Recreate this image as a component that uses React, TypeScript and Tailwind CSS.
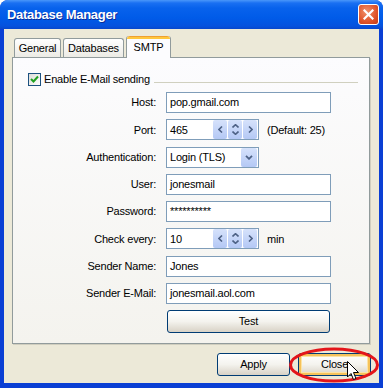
import type { ReactNode } from 'react'

const inputBox = 'h-[21px] border border-[#7F9DB9] bg-white flex items-center pl-[3px]'

function Row({ label, children }: { label: string; children: ReactNode }) {
  return (
    <div className="flex h-[21px] items-center">
      <div className="w-[144px] pr-[1px] text-right">{label}</div>
      <div className="ml-[9px] flex items-center">{children}</div>
    </div>
  )
}

function SpinButtons() {
  return (
    <div className="ml-auto mr-[1px] flex h-[19px] gap-[1px]">
      {/* left */}
      <div className="flex w-[14px] items-center justify-center rounded-[2px] bg-gradient-to-b from-[#D6E2FB] to-[#B4C8F5]">
        <svg width="5" height="7" viewBox="0 0 5 7">
          <path d="M4 0.5 L1 3.5 L4 6.5" fill="none" stroke="#4D6185" strokeWidth="1.6" />
        </svg>
      </div>
      {/* up / down */}
      <div className="flex w-[14px] flex-col items-center justify-center gap-[3px] rounded-[2px] bg-gradient-to-b from-[#D6E2FB] to-[#B4C8F5]">
        <svg width="7" height="4" viewBox="0 0 7 4">
          <path d="M0.5 3.5 L3.5 0.7 L6.5 3.5" fill="none" stroke="#4D6185" strokeWidth="1.6" />
        </svg>
        <svg width="7" height="4" viewBox="0 0 7 4">
          <path d="M0.5 0.5 L3.5 3.3 L6.5 0.5" fill="none" stroke="#4D6185" strokeWidth="1.6" />
        </svg>
      </div>
      {/* right */}
      <div className="flex w-[14px] items-center justify-center rounded-[2px] bg-gradient-to-b from-[#D6E2FB] to-[#B4C8F5]">
        <svg width="5" height="7" viewBox="0 0 5 7">
          <path d="M1 0.5 L4 3.5 L1 6.5" fill="none" stroke="#4D6185" strokeWidth="1.6" />
        </svg>
      </div>
    </div>
  )
}

function XpButton({ children, focused = false }: { children: ReactNode; focused?: boolean }) {
  return (
    <div className="h-[23px] w-[73px] rounded-[3px] border border-[#003C74] bg-gradient-to-b from-[#FFFFFF] via-[#F4F3EE] to-[#D8D2C6]">
      <div
        className={`flex h-full w-full items-center justify-center rounded-[2px] ${
          focused ? 'border-2 border-[#F5C25A] shadow-[inset_0_0_0_1px_#FCE3A5]' : ''
        }`}
      >
        {children}
      </div>
    </div>
  )
}

export default function App() {
  return (
    <div className="relative h-[388px] w-[383px] overflow-hidden bg-white font-['Liberation_Sans',Arial,sans-serif] text-[11px] tracking-[-0.2px] text-black">
      <div className="flex h-full flex-col rounded-t-[8px] bg-[#0A3FD4]">
        {/* title bar */}
        <div className="flex h-[29px] shrink-0 items-center justify-between rounded-t-[8px] bg-[linear-gradient(to_bottom,#4A97FA_0px,#1A70F2_3px,#0862EC_8px,#005BE8_18px,#0552DE_26px,#0847CC_29px)] pl-[7px] pr-[4px]">
          <span className="text-[13px] font-bold tracking-[-0.3px] text-white [text-shadow:1px_1px_0_#0B2E9A]">
            Database Manager
          </span>
          <div className="flex h-[21px] w-[21px] items-center justify-center rounded-[3px] border border-white bg-[radial-gradient(circle_at_40%_35%,#F0926C,#E0542A_60%,#C23A16)]">
            <svg width="11" height="11" viewBox="0 0 11 11">
              <path d="M1.5 1.5 L9.5 9.5 M9.5 1.5 L1.5 9.5" stroke="white" strokeWidth="2.2" strokeLinecap="square" />
            </svg>
          </div>
        </div>

        {/* body */}
        <div className="mx-[4px] mb-[5px] flex flex-1 flex-col bg-[#ECE9D8]">
          {/* tabs */}
          <div className="relative z-10 mt-[7px] flex h-[21px] items-end gap-[2px] pl-[10px]">
            <div className="flex h-[19px] w-[47px] items-center justify-center rounded-t-[3px] border border-b-0 border-[#919B9C] bg-gradient-to-b from-white to-[#ECEBE5] pt-[1px]">
              General
            </div>
            <div className="flex h-[19px] w-[61px] items-center justify-center rounded-t-[3px] border border-b-0 border-[#919B9C] bg-gradient-to-b from-white to-[#ECEBE5] pt-[1px]">
              Databases
            </div>
            <div className="-mb-px flex h-[22px] w-[45px] flex-col rounded-t-[3px] border-x border-[#919B9C] bg-[#FCFCFE]">
              <div className="h-[3px] rounded-t-[3px] bg-gradient-to-b from-[#E68B2C] via-[#FFC73C] to-[#FFC73C]" />
              <div className="flex flex-1 items-center justify-center pb-[2px]">SMTP</div>
            </div>
          </div>

          {/* panel */}
          <div className="ml-[8px] h-[287px] w-[358px] border border-[#919B9C] bg-gradient-to-b from-[#FCFCFE] to-[#F4F3EE] shadow-[1px_1px_0_#D0CEBF]">
            <div className="flex h-[13px] items-center pl-[15px] mt-[15px]">
              <div className="flex h-[13px] w-[13px] shrink-0 items-center justify-center border border-[#1C5180] bg-gradient-to-br from-[#DCDCD7] to-white">
                <svg width="9" height="9" viewBox="0 0 9 9">
                  <path d="M1 4 L3.5 6.5 L8 1.5" fill="none" stroke="#21A121" strokeWidth="2" />
                </svg>
              </div>
              <span className="ml-[3px] leading-[13px]">Enable E-Mail sending</span>
              <div className="ml-[4px] mr-[11px] mt-[5px] h-px flex-1 bg-[#D0D0BF]" />
            </div>

            <div className="mt-[6px] flex flex-col gap-[6.25px]">
              <Row label="Host:">
                <div className={`${inputBox} w-[165px]`}>pop.gmail.com</div>
              </Row>
              <Row label="Port:">
                <div className={`${inputBox} w-[93px]`}>
                  <span>465</span>
                  <SpinButtons />
                </div>
                <span className="ml-[8px]">(Default: 25)</span>
              </Row>
              <Row label="Authentication:">
                <div className={`${inputBox} w-[93px]`}>
                  <span>Login (TLS)</span>
                  <div className="ml-auto mr-[1px] flex h-[19px] w-[16px] items-center justify-center rounded-[2px] bg-gradient-to-b from-[#D6E2FB] to-[#B4C8F5]">
                    <svg width="8" height="5" viewBox="0 0 8 5">
                      <path d="M1 0.8 L4 3.8 L7 0.8" fill="none" stroke="#4D6185" strokeWidth="1.8" />
                    </svg>
                  </div>
                </div>
              </Row>
              <Row label="User:">
                <div className={`${inputBox} w-[165px]`}>jonesmail</div>
              </Row>
              <Row label="Password:">
                <div className={`${inputBox} w-[165px]`}>**********</div>
              </Row>
              <Row label="Check every:">
                <div className={`${inputBox} w-[93px]`}>
                  <span>10</span>
                  <SpinButtons />
                </div>
                <span className="ml-[8px]">min</span>
              </Row>
              <Row label="Sender Name:">
                <div className={`${inputBox} w-[165px]`}>Jones</div>
              </Row>
              <Row label="Sender E-Mail:">
                <div className={`${inputBox} w-[165px]`}>jonesmail.aol.com</div>
              </Row>
              <div className="flex h-[23px]">
                <div className="ml-[154px] flex h-[23px] w-[163px] items-center justify-center rounded-[3px] border border-[#003C74] bg-gradient-to-b from-[#FFFFFF] via-[#F4F3EE] to-[#D8D2C6]">
                  Test
                </div>
              </div>
            </div>
          </div>

          {/* buttons */}
          <div className="mt-[9px] flex justify-end gap-[8px] pr-[8px]">
            <XpButton>Apply</XpButton>
            <XpButton focused>Close</XpButton>
          </div>
        </div>
      </div>

      {/* red highlight ring */}
      <svg className="pointer-events-none absolute left-[288px] top-[346px]" width="92" height="38" viewBox="0 0 92 38">
        <ellipse cx="46" cy="19" rx="43.5" ry="16" fill="none" stroke="#E3151A" strokeWidth="3" />
      </svg>

      {/* mouse cursor */}
      <svg className="pointer-events-none absolute left-[347px] top-[361px]" width="13" height="20" viewBox="0 0 13 20">
        <path d="M0.5 0.5 L0.5 16 L4 12.5 L6.5 18.5 L9 17.5 L6.5 11.5 L11.5 11.5 Z" fill="white" stroke="black" strokeWidth="1" strokeLinejoin="miter" />
      </svg>
    </div>
  )
}
